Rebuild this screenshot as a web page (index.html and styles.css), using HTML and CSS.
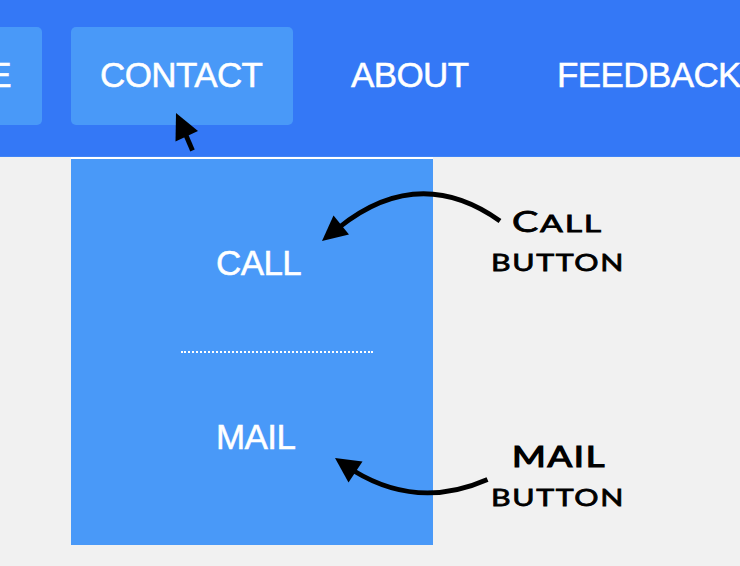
FILE: index.html
```html
<!DOCTYPE html>
<html lang="en">
<head>
<meta charset="utf-8">
<title>Navigation</title>
<link rel="stylesheet" href="styles.css">
</head>
<body>
<nav class="nav">
  <a class="item active home">HOME</a>
  <a class="item active contact">CONTACT</a>
  <a class="item about">ABOUT</a>
  <a class="item">FEEDBACK</a>
</nav>
<div class="menu">
  <a class="entry">CALL</a>
  <div class="divider"></div>
  <a class="entry">MAIL</a>
</div>
<svg class="notes" width="740" height="566" viewBox="0 0 740 566">
  <path d="M176 113L198 131L175.500 141.500Z"/>
  <path class="line" d="M185 133L192.500 150.500"/>
  <path d="M322 241L333.500 215.500L349 234.500Z"/>
  <path class="line" d="M339 227.500Q419 163.500 500 221"/>
  <path d="M335 458L362.500 461.500L348.500 482.500Z"/>
  <path class="line" d="M354 471Q418 510 487.500 479.500"/>
  <text x="512" y="232" textLength="91" lengthAdjust="spacingAndGlyphs"><tspan class="cap">C</tspan>ALL</text>
  <text x="491" y="271" textLength="134" lengthAdjust="spacingAndGlyphs">BUTTON</text>
  <text class="cap mail" x="512" y="467" textLength="94" lengthAdjust="spacingAndGlyphs">MAIL</text>
  <text x="491" y="506" textLength="134" lengthAdjust="spacingAndGlyphs">BUTTON</text>
</svg>
</body>
</html>
```
FILE: styles.css
```css
* { box-sizing: border-box; }
body {
  margin: 0;
  width: 740px;
  height: 566px;
  overflow: hidden;
  background: #f1f1f1;
  font-family: "Liberation Sans", Arial, sans-serif;
  font-size: 35px;
  letter-spacing: -0.6px;
  -webkit-text-stroke: 0.5px #fff;
  color: #fff;
}
.nav {
  display: flex;
  gap: 29px;
  height: 157px;
  padding: 27px 0 32px;
  background: #3478f6;
  border-bottom: 1px solid #4084f6;
  overflow: hidden;
}
.item {
  flex: none;
  height: 98px;
  padding: 0 29px;
  line-height: 95px;
  border-radius: 5px;
}
.active { background: #4999f8; }
.home {
  width: 170px;
  margin-left: -128px;
  padding-right: 31px;
  text-align: right;
}
.contact { width: 222px; }
.about { width: 177px; }
.menu {
  width: 362px;
  height: 388px;
  margin-left: 71px;
  padding: 15px 60px 0 110px;
  border-top: 2px solid #fff;
  background: #4999f8;
}
.entry {
  display: block;
  height: 177px;
  padding-left: 35px;
  line-height: 177px;
}
.divider {
  height: 2px;
  border-top: 2px dotted #fff;
}
.entry:last-child { line-height: 168px; }
.notes {
  position: absolute;
  top: 0;
  left: 0;
}
.line {
  fill: none;
  stroke: #000;
  stroke-width: 4.8;
}
.notes text {
  font-family: Lato, sans-serif;
  font-size: 24px;
  font-weight: 400;
  letter-spacing: 1.3px;
  stroke: #000;
  stroke-width: 0.8px;
  -webkit-text-stroke: 0;
}
.notes .cap { font-size: 28px; }
.notes .mail { stroke-width: 1.2px; }
```
